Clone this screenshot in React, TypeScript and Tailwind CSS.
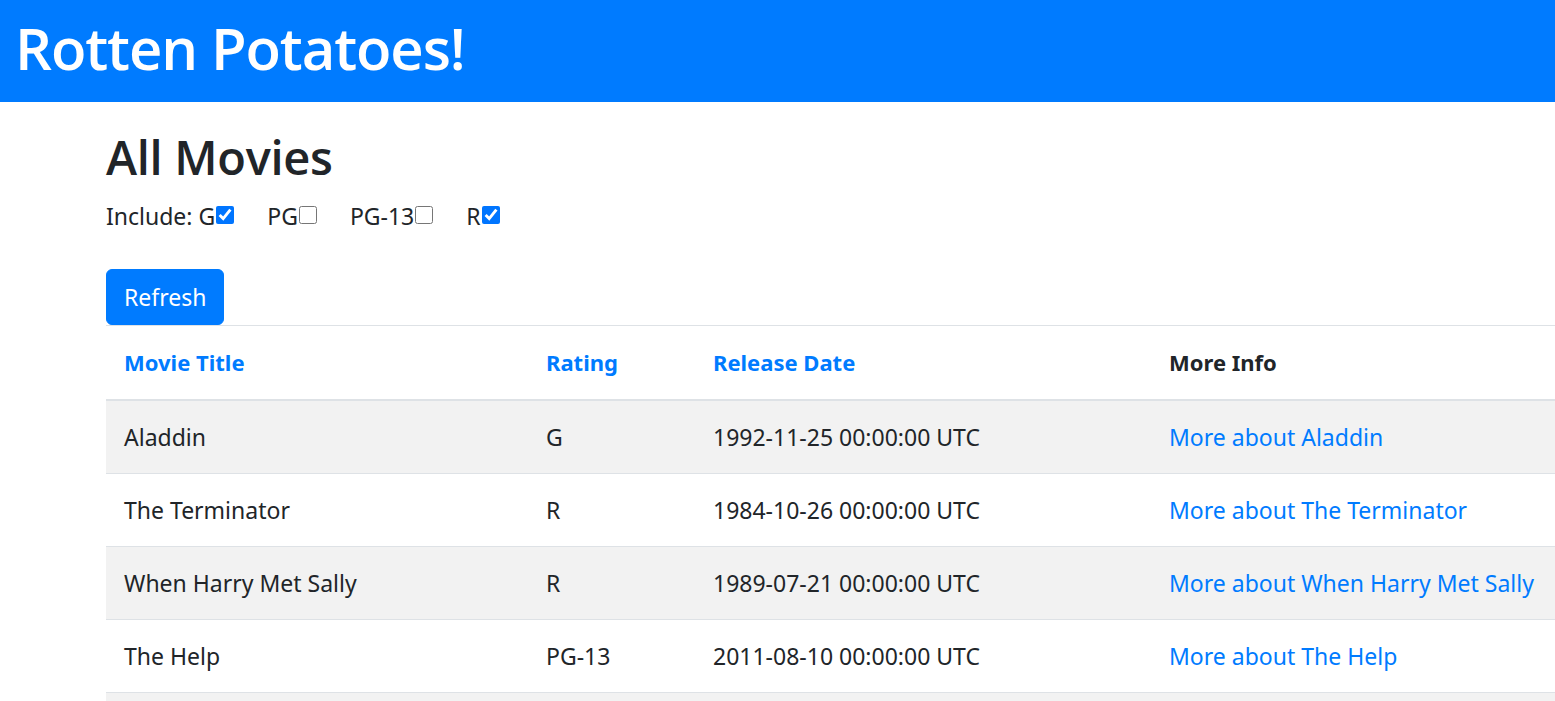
import React from "react";

const movies = [
  { title: "Aladdin", rating: "G", date: "1992-11-25 00:00:00 UTC" },
  { title: "The Terminator", rating: "R", date: "1984-10-26 00:00:00 UTC" },
  { title: "When Harry Met Sally", rating: "R", date: "1989-07-21 00:00:00 UTC" },
  { title: "The Help", rating: "PG-13", date: "2011-08-10 00:00:00 UTC" },
];

function Box({ checked }: { checked: boolean }) {
  return (
    <input
      type="checkbox"
      defaultChecked={checked}
      className="m-0 ml-[1px] w-[18px] h-[18px] self-start mt-[8px] accent-[#0075ff]"
    />
  );
}

const th = "text-left font-bold text-[22px] px-[18px] pt-[18px] pb-[19px] border-b-2 border-[#dee2e6]";
const td = "p-[18px] border-b border-[#dee2e6] whitespace-nowrap";
const headFont = { fontFamily: '"Open Sans", "Noto Sans", sans-serif' };

export default function App() {
  return (
    <div
      className="w-[1555px] h-[701px] overflow-hidden bg-white text-[#212529]"
      style={{ fontFamily: '"Noto Sans", "Open Sans", sans-serif' }}
    >
      <div className="h-[102px] bg-[#007bff] pl-[15px] pt-[13px]">
        <h1 className="text-white text-[58px] leading-[70px] font-semibold tracking-[-1.1px]" style={headFont}>
          Rotten Potatoes!
        </h1>
      </div>
      <div className="pl-[106px] pt-[27px]">
        <h2 className="text-[47px] leading-[56px] font-semibold tracking-[-0.3px]" style={headFont}>
          All Movies
        </h2>
        <div className="mt-[13px] text-[23px] leading-[36px] flex items-center">
          <span>Include: G</span>
          <Box checked={true} />
          <span className="ml-[33px]">PG</span>
          <Box checked={false} />
          <span className="ml-[33px]">PG-13</span>
          <Box checked={false} />
          <span className="ml-[33px]">R</span>
          <Box checked={true} />
        </div>
        <div className="mt-[35px]">
          <button className="h-[56px] px-[17px] bg-[#007bff] text-white text-[23px] leading-[36px] rounded-[6px] border border-[#007bff]">
            Refresh
          </button>
        </div>
        <table className="w-[1460px] border-collapse text-[23px] leading-[36px] table-fixed">
          <colgroup>
            <col className="w-[422px]" />
            <col className="w-[167px]" />
            <col className="w-[456px]" />
            <col />
          </colgroup>
          <thead>
            <tr className="border-t border-[#dee2e6]">
              <th className={`${th} text-[#007bff]`}>Movie Title</th>
              <th className={`${th} text-[#007bff]`}>Rating</th>
              <th className={`${th} text-[#007bff]`}>Release Date</th>
              <th className={th}>More Info</th>
            </tr>
          </thead>
          <tbody>
            {movies.map((m, i) => (
              <tr key={m.title} className={i % 2 === 0 ? "bg-[#f2f2f2]" : "bg-white"}>
                <td className={td}>{m.title}</td>
                <td className={td}>{m.rating}</td>
                <td className={td}>{m.date}</td>
                <td className={`${td} text-[#007bff]`}>More about {m.title}</td>
              </tr>
            ))}
            <tr className="bg-[#f2f2f2]">
              <td className="h-[73px]" colSpan={4}></td>
            </tr>
          </tbody>
        </table>
      </div>
    </div>
  );
}
